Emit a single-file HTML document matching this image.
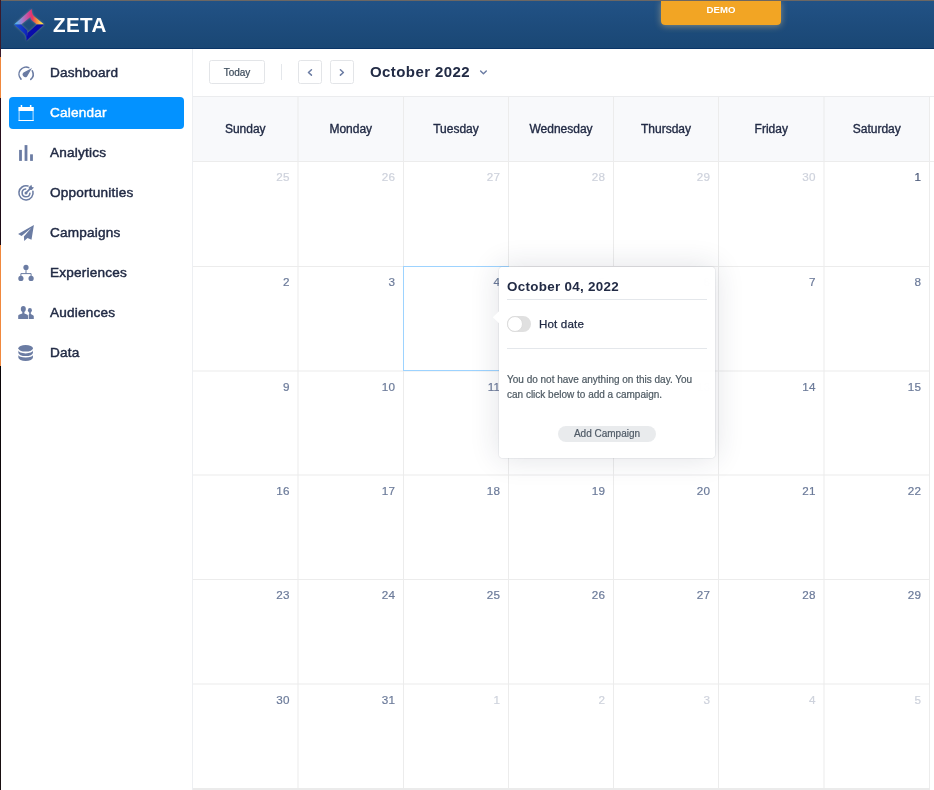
<!DOCTYPE html>
<html lang="en">
<head>
<meta charset="utf-8">
<title>Zeta - Calendar</title>
<style>
*{box-sizing:border-box;margin:0;padding:0}
html,body{width:934px;height:790px;overflow:hidden;background:#fff}
body{position:relative;font-family:"Liberation Sans",Arial,sans-serif;color:#222b45;-webkit-font-smoothing:antialiased}
.abs{position:absolute}
#root{position:absolute;left:0;top:0;width:934px;height:790px;overflow:hidden;opacity:.9999}
#strip{position:absolute;left:0;top:0;width:1px;height:790px;background:linear-gradient(to bottom,#3a1a2c 0,#3a1a2c 57px,#f0883e 57px,#f0883e 98px,#2a1020 98px,#1a0a14 245px,#f0883e 245px,#f0883e 366px,#0a0508 366px,#1a1012 790px)}
#topline{position:absolute;left:0;top:0;width:934px;height:1px;background:#6c6763}
#header{position:absolute;left:1px;top:1px;width:933px;height:48px;background:linear-gradient(to bottom,rgba(31,80,132,.99) 0,rgba(27,74,123,.99) 50%,rgba(23,69,115,.99) 100%);border-bottom:1px solid #0a3567}
#brand{position:absolute;left:52px;top:11px;font-size:20.6px;line-height:26px;font-weight:bold;color:#fff;letter-spacing:.35px}
#demo{position:absolute;left:661px;top:1px;width:120px;height:24px;background:rgba(245,166,35,.99);border-radius:0 0 4px 4px;color:#fff;font-size:9.6px;font-weight:bold;text-align:center;line-height:18px;box-shadow:0 1px 7px rgba(255,215,140,.45)}
#side{position:absolute;left:1px;top:49px;width:192px;height:741px;border-right:1px solid #edeff2}
.nav{position:absolute;left:9px;width:175px;height:32px;border-radius:4px;font-size:13.6px;letter-spacing:.2px;line-height:31px;font-weight:normal;-webkit-text-stroke:.45px currentColor;color:#222b45;padding-left:41px}
.nav.act{background:rgba(0,145,255,.99);color:#fff}
#tb{position:absolute;left:193px;top:49px;width:741px;height:47px}
.btn{position:absolute;top:60px;height:24px;border:1px solid #e3e5e8;border-radius:2.5px;font-size:10px;line-height:24px;-webkit-text-stroke:.2px currentColor;text-align:center;color:#3b4a5a}
#month{position:absolute;left:370px;top:61px;font-size:15px;letter-spacing:.42px;line-height:22px;font-weight:bold;color:#222b45}
.hl{position:absolute;left:193px;width:737px;height:1px;background:#ebecee}
.btn svg{position:absolute;left:0;top:0}
#hdbg{position:absolute;left:193px;top:97px;width:737px;height:64px;background:rgba(248,249,251,.99)}
.dh{position:absolute;top:97px;height:64px;line-height:64px;text-align:center;font-size:12px;font-weight:normal;-webkit-text-stroke:.35px currentColor;color:#222b45}
.dn{position:absolute;height:30px;line-height:30px;text-align:right;padding-right:7.8px;font-size:11.7px;letter-spacing:.2px;color:#6b7a99;-webkit-text-stroke:.2px currentColor}
.dn.o{color:#ced2dc}
.dn.f{color:#4a5878}
#sel{position:absolute;left:403px;top:266px;width:106px;height:105px;border:1px solid #9dd3ff}
#pop{position:absolute;left:499px;top:267px;width:216px;height:191px;background:rgba(255,255,255,.995);border-radius:4px;box-shadow:0 0 30px rgba(34,43,69,.14),0 0 1.5px rgba(34,43,69,.28)}
#pop h3{position:absolute;left:8px;top:10px;font-size:13.4px;letter-spacing:.3px;line-height:20px;font-weight:bold;color:#222b45;white-space:nowrap}
.pl{position:absolute;left:8px;width:200px;height:1px;background:#e4e7eb}
#tog{position:absolute;left:8px;top:49px;width:24px;height:16px;border-radius:8px;background:#e0e0e0}
#tog i{position:absolute;left:0;top:0;width:16px;height:16px;border-radius:50%;background:#fff;border:1px solid #dcdcdc}
#hot{position:absolute;left:40px;top:46.5px;font-size:11.6px;letter-spacing:.15px;line-height:20px;color:#222b45;-webkit-text-stroke:.25px currentColor}
#msg{position:absolute;left:8px;top:106px;-webkit-text-stroke:.2px currentColor;width:200px;font-size:10px;line-height:14.8px;color:#4d5962}
#add{position:absolute;left:59px;top:159px;-webkit-text-stroke:.2px currentColor;width:98px;height:16px;border-radius:8px;background:rgba(233,235,237,.99);font-size:10px;line-height:16px;text-align:center;color:#4f5a66}
#bot{position:absolute;left:193px;top:788px;width:737px;height:2px;background:#ebebeb}
</style>
</head>
<body>
<div id="root">
<div id="side">
</div>
<div id="tb"></div>
<div id="hdbg"></div>
<div class="hl" style="top:96px;left:193px;width:741px"></div>
<svg class="abs" style="left:0;top:0" width="934" height="790" viewBox="0 0 934 790"><g fill="#ececec">
<rect x="297.50" y="97" width="1" height="692"/>
<rect x="403.00" y="97" width="1" height="692"/>
<rect x="508.00" y="97" width="1" height="692"/>
<rect x="613.00" y="97" width="1" height="692"/>
<rect x="718.00" y="97" width="1" height="692"/>
<rect x="823.50" y="97" width="1" height="692"/>
<rect x="929.00" y="97" width="1" height="692"/>
<rect x="193" y="161.00" width="741" height="1"/>
<rect x="193" y="266.00" width="737" height="1"/>
<rect x="193" y="370.50" width="737" height="1"/>
<rect x="193" y="474.50" width="737" height="1"/>
<rect x="193" y="579.00" width="737" height="1"/>
<rect x="193" y="683.50" width="737" height="1"/>
</g></svg>
<div class="dh" style="left:193.00px;width:104.50px">Sunday</div>
<div class="dh" style="left:298.50px;width:104.50px">Monday</div>
<div class="dh" style="left:404.00px;width:104.00px">Tuesday</div>
<div class="dh" style="left:509.00px;width:104.00px">Wednesday</div>
<div class="dh" style="left:614.00px;width:104.00px">Thursday</div>
<div class="dh" style="left:719.00px;width:104.50px">Friday</div>
<div class="dh" style="left:824.50px;width:104.50px">Saturday</div>
<div class="dn o" style="left:193.00px;top:162.0px;width:104.50px">25</div>
<div class="dn o" style="left:298.50px;top:162.0px;width:104.50px">26</div>
<div class="dn o" style="left:404.00px;top:162.0px;width:104.00px">27</div>
<div class="dn o" style="left:509.00px;top:162.0px;width:104.00px">28</div>
<div class="dn o" style="left:614.00px;top:162.0px;width:104.00px">29</div>
<div class="dn o" style="left:719.00px;top:162.0px;width:104.50px">30</div>
<div class="dn f" style="left:824.50px;top:162.0px;width:104.50px">1</div>
<div class="dn" style="left:193.00px;top:267.0px;width:104.50px">2</div>
<div class="dn" style="left:298.50px;top:267.0px;width:104.50px">3</div>
<div class="dn" style="left:404.00px;top:267.0px;width:104.00px">4</div>
<div class="dn" style="left:509.00px;top:267.0px;width:104.00px">5</div>
<div class="dn" style="left:614.00px;top:267.0px;width:104.00px">6</div>
<div class="dn" style="left:719.00px;top:267.0px;width:104.50px">7</div>
<div class="dn" style="left:824.50px;top:267.0px;width:104.50px">8</div>
<div class="dn" style="left:193.00px;top:371.5px;width:104.50px">9</div>
<div class="dn" style="left:298.50px;top:371.5px;width:104.50px">10</div>
<div class="dn" style="left:404.00px;top:371.5px;width:104.00px">11</div>
<div class="dn" style="left:509.00px;top:371.5px;width:104.00px">12</div>
<div class="dn" style="left:614.00px;top:371.5px;width:104.00px">13</div>
<div class="dn" style="left:719.00px;top:371.5px;width:104.50px">14</div>
<div class="dn" style="left:824.50px;top:371.5px;width:104.50px">15</div>
<div class="dn" style="left:193.00px;top:475.5px;width:104.50px">16</div>
<div class="dn" style="left:298.50px;top:475.5px;width:104.50px">17</div>
<div class="dn" style="left:404.00px;top:475.5px;width:104.00px">18</div>
<div class="dn" style="left:509.00px;top:475.5px;width:104.00px">19</div>
<div class="dn" style="left:614.00px;top:475.5px;width:104.00px">20</div>
<div class="dn" style="left:719.00px;top:475.5px;width:104.50px">21</div>
<div class="dn" style="left:824.50px;top:475.5px;width:104.50px">22</div>
<div class="dn" style="left:193.00px;top:580.0px;width:104.50px">23</div>
<div class="dn" style="left:298.50px;top:580.0px;width:104.50px">24</div>
<div class="dn" style="left:404.00px;top:580.0px;width:104.00px">25</div>
<div class="dn" style="left:509.00px;top:580.0px;width:104.00px">26</div>
<div class="dn" style="left:614.00px;top:580.0px;width:104.00px">27</div>
<div class="dn" style="left:719.00px;top:580.0px;width:104.50px">28</div>
<div class="dn" style="left:824.50px;top:580.0px;width:104.50px">29</div>
<div class="dn" style="left:193.00px;top:684.5px;width:104.50px">30</div>
<div class="dn" style="left:298.50px;top:684.5px;width:104.50px">31</div>
<div class="dn o" style="left:404.00px;top:684.5px;width:104.00px">1</div>
<div class="dn o" style="left:509.00px;top:684.5px;width:104.00px">2</div>
<div class="dn o" style="left:614.00px;top:684.5px;width:104.00px">3</div>
<div class="dn o" style="left:719.00px;top:684.5px;width:104.50px">4</div>
<div class="dn o" style="left:824.50px;top:684.5px;width:104.50px">5</div>
<div id="bot"></div>
<div id="sel"></div>

<div class="btn" style="left:209px;width:56px">Today</div>
<div class="abs" style="left:281px;top:64px;width:1px;height:16px;background:#e4e7eb"></div>
<div class="btn" style="left:298px;width:24px"><svg width="22" height="22" viewBox="0 0 22 22"><path d="M12.45 8.75 L9.45 11.45 L12.45 14.15" fill="none" stroke="#6b7ca3" stroke-width="1.5" stroke-linecap="round" stroke-linejoin="round"/></svg></div>
<div class="btn" style="left:330px;width:24px"><svg width="22" height="22" viewBox="0 0 22 22"><path d="M9.4 8.75 L12.4 11.45 L9.4 14.15" fill="none" stroke="#6b7ca3" stroke-width="1.5" stroke-linecap="round" stroke-linejoin="round"/></svg></div>
<div id="month">October 2022</div>
<svg class="abs" style="left:478px;top:66px" width="12" height="12" viewBox="0 0 12 12"><path d="M2.6 4.9 L5.45 7.8 L8.3 4.9" fill="none" stroke="#6b7ca3" stroke-width="1.4" stroke-linecap="round" stroke-linejoin="round"/></svg>

<div id="header">
<div id="brand">ZETA</div>
</div>
<div id="demo">DEMO</div>

<div class="nav" style="top:57px">Dashboard</div>
<div class="nav act" style="top:97px">Calendar</div>
<div class="nav" style="top:137px">Analytics</div>
<div class="nav" style="top:177px">Opportunities</div>
<div class="nav" style="top:217px">Campaigns</div>
<div class="nav" style="top:257px">Experiences</div>
<div class="nav" style="top:297px">Audiences</div>
<div class="nav" style="top:337px">Data</div>

<svg class="abs" style="left:0;top:0" width="192" height="400" viewBox="0 0 192 400">
<defs>
<linearGradient id="lgTop" gradientUnits="userSpaceOnUse" x1="14" y1="0" x2="44.2" y2="0">
<stop offset="0" stop-color="#35c6ff"/>
<stop offset="0.25" stop-color="#9a86d2"/>
<stop offset="0.5" stop-color="#d6408f"/>
<stop offset="0.6" stop-color="#e23368"/>
<stop offset="0.72" stop-color="#f4793f"/>
<stop offset="0.86" stop-color="#fbc246"/>
<stop offset="1" stop-color="#fff84a"/>
</linearGradient>
<linearGradient id="lgBl" gradientUnits="userSpaceOnUse" x1="14" y1="0" x2="28" y2="0">
<stop offset="0" stop-color="#1d55dc"/>
<stop offset="1" stop-color="#0c1fb4"/>
</linearGradient>
</defs>
<g id="logo" style="filter:drop-shadow(0 0 1.2px rgba(255,240,190,.35))">
<path fill="url(#lgTop)" d="M14.1,24.6 L31.7,9.1 C31.9,13 32.4,15 34,16.3 L44.2,24.6 L37,24.6 L32.4,20.8 C31,19.6 30.6,18.5 30.6,16.8 L21.1,24.6 Z"/>
<path fill="url(#lgBl)" d="M14.1,24.6 L21.1,24.6 L26.3,29.6 C27.2,30.6 27.5,31.5 27.5,33 L26.4,40.8 C26.2,37 25.8,35 24.3,33.6 Z"/>
<path fill="#0a0cab" d="M26.4,40.8 L27.5,33 L37,24.6 L44.2,24.6 Z"/>
</g>
<g fill="none" stroke="#6b7ca3" stroke-width="1.55" stroke-linecap="round">
<path d="M21,79.1 A7.1,7.1 0 0 1 28.8,67.6"/>
<path d="M32.3,70.8 A7.1,7.1 0 0 1 30.75,79.4"/>
<path d="M27.96,186.08 A7.1,7.1 0 1 0 32.92,191.3"/>
<path d="M25.66,189 A3.9,3.9 0 1 0 29.9,193.24"/>
<path d="M26,192.9 L30.5,188.4"/>
</g>
<g fill="#6b7ca3">
<path d="M32,68 L27.1,76.4 A2.6,2.6 0 1 1 23.5,72.6 Z"/>
<rect x="19.1" y="149.9" width="2.8" height="11"/>
<rect x="24.6" y="145.1" width="2.8" height="15.8"/>
<rect x="30.1" y="154.3" width="2.8" height="6.6"/>
<circle cx="26" cy="192.9" r="1.5"/>
<path d="M31.4,184.8 L32,186.9 L34,187.4 L31.7,190 L29,189.8 L28.7,187.3 Z"/>
<path d="M33.9,225 L18.1,234 L21.6,235.9 L31.3,228.1 L23.9,236.5 L24.2,241 L27.5,237.9 L31.5,239.8 Z"/>
<circle cx="26" cy="267.4" r="2.6"/>
<circle cx="20.9" cy="278.4" r="2.6"/>
<circle cx="31.1" cy="278.4" r="2.6"/>
<path d="M26,269 V273.6 M20.9,277 V273.6 H31.1 V277" fill="none" stroke="#6b7ca3" stroke-width="1"/>
<ellipse cx="23.3" cy="309" rx="2.5" ry="3"/>
<path d="M18.2,318.9 V316 Q18.2,314.8 19.5,314.4 L22.3,313.4 V311 H24.4 V313.4 L27,314.4 Q28,314.8 28,316 V318.9 Z"/>
<ellipse cx="29.9" cy="310.3" rx="2" ry="2.4"/>
<path d="M28.7,318.9 V314.8 L29.2,314 V312 h1.6 V314 L33,315.2 Q33.8,315.6 33.8,316.6 V318.9 Z"/>
<ellipse cx="25.65" cy="348.3" rx="7.3" ry="3.3"/>
<path d="M18.35,350.6 A7.3,2.8 0 0 0 32.95,350.6 L32.95,352.8 A7.3,3.3 0 0 1 18.35,352.8 Z"/>
<path d="M18.35,355 A7.3,2.6 0 0 0 32.95,355 L32.95,357.6 A7.3,3.3 0 0 1 18.35,357.6 Z"/>
</g>
<g fill="#fff">
<rect x="18.6" y="107" width="15" height="4"/>
<rect x="18.6" y="107" width="1" height="14" opacity=".75"/>
<rect x="32.6" y="107" width="1" height="14" opacity=".75"/>
<rect x="18.6" y="120" width="15" height="1"/>
<rect x="20.7" y="105" width="1.5" height="2.5"/>
<rect x="29.9" y="105" width="1.5" height="2.5"/>
</g>
</svg>

<div id="pop">
<h3>October 04, 2022</h3>
<div class="pl" style="top:32px"></div>
<div id="tog"><i></i></div>
<div id="hot">Hot date</div>
<div class="pl" style="top:81px"></div>
<div id="msg">You do not have anything on this day. You can click below to add a campaign.</div>
<div id="add">Add Campaign</div>
</div>
<svg class="abs" style="left:490px;top:306px" width="12" height="24" viewBox="490 306 12 24"><polygon points="499.8,310.6 492.8,317.3 499.8,324" fill="#fff"/></svg>
<div id="topline"></div>
<div id="strip"></div>
</div>
</body>
</html>
